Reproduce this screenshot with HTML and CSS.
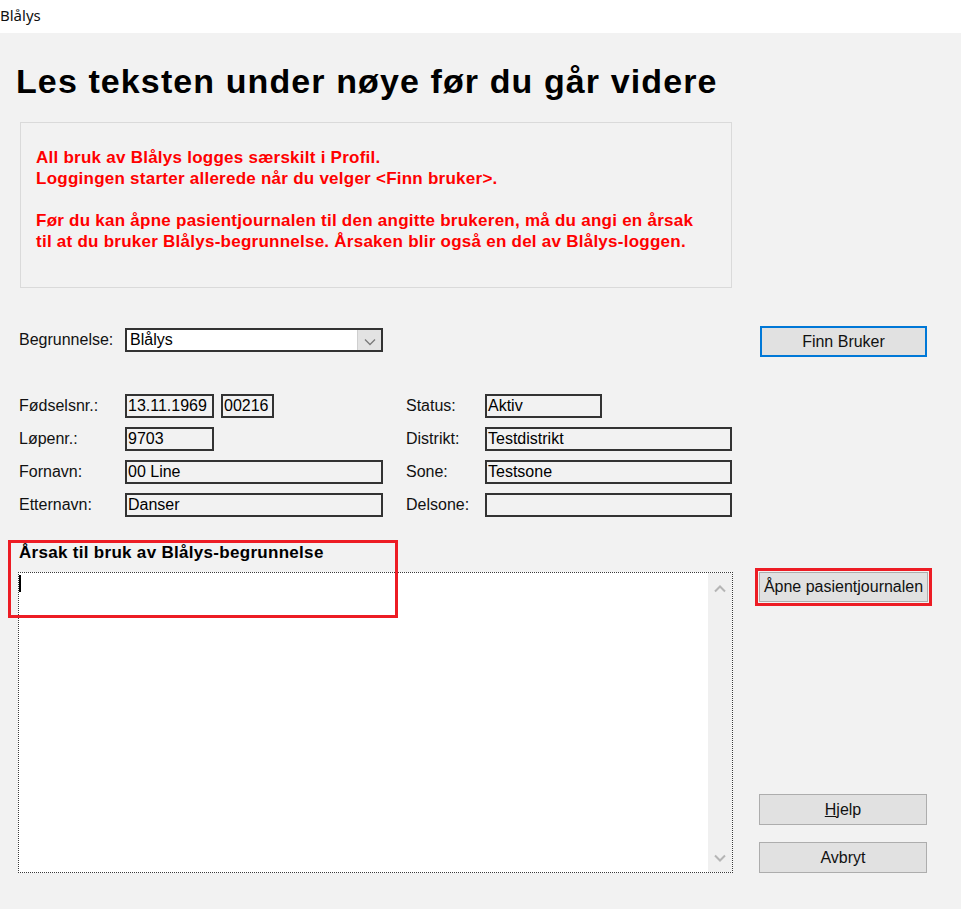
FILE: index.html
```html
<!DOCTYPE html>
<html lang="no">
<head>
<meta charset="utf-8">
<title>Blålys</title>
<link rel="stylesheet" href="styles.css">
</head>
<body>
<div class="titlebar">Blålys</div>
<main class="window">
  <h1 class="heading">Les teksten under nøye før du går videre</h1>
  <div class="notice">
    <p>All bruk av Blålys logges særskilt i Profil.<br>Loggingen starter allerede når du velger &lt;Finn bruker&gt;.</p>
    <p>Før du kan åpne pasientjournalen til den angitte brukeren, må du angi en årsak<br>til at du bruker Blålys-begrunnelse. Årsaken blir også en del av Blålys-loggen.</p>
  </div>
  <div class="form">
    <div class="combo-row">
      <span class="lbl lbl-wide">Begrunnelse:</span>
      <div class="combo">
        <span class="combo-text">Blålys</span>
        <span class="combo-btn"><svg width="12" height="8" viewBox="0 0 12 8"><path d="M1 1.5 L6 6.5 L11 1.5" fill="none" stroke="#7a7a7a" stroke-width="1.3"/></svg></span>
      </div>
      <button class="btn btn-default">Finn Bruker</button>
    </div>

    <div class="fields">
      <span class="lbl">Fødselsnr.:</span>
      <div class="pair"><span class="box w-date">13.11.1969</span><span class="box w-pnr">00216</span></div>
      <span class="lbl">Status:</span>
      <span class="box w-status">Aktiv</span>

      <span class="lbl">Løpenr.:</span>
      <span class="box w-date">9703</span>
      <span class="lbl">Distrikt:</span>
      <span class="box w-right">Testdistrikt</span>

      <span class="lbl">Fornavn:</span>
      <span class="box w-long">00 Line</span>
      <span class="lbl">Sone:</span>
      <span class="box w-right">Testsone</span>

      <span class="lbl">Etternavn:</span>
      <span class="box w-long">Danser</span>
      <span class="lbl">Delsone:</span>
      <span class="box w-right"></span>
    </div>

    <div class="reason">
      <div class="reason-title">Årsak til bruk av Blålys-begrunnelse</div>
      <div class="memo">
        <div class="memo-text"><span class="caret"></span></div>
        <div class="scrollbar">
          <svg width="12" height="8" viewBox="0 0 12 8"><path d="M1 6.5 L6 1.5 L11 6.5" fill="none" stroke="#b5b5b5" stroke-width="2"/></svg>
          <svg width="12" height="8" viewBox="0 0 12 8"><path d="M1 1.5 L6 6.5 L11 1.5" fill="none" stroke="#b5b5b5" stroke-width="2"/></svg>
        </div>
      </div>
      <div class="side">
        <button class="btn btn-marked">Åpne pasientjournalen</button>
        <button class="btn btn-help"><u>H</u>jelp</button>
        <button class="btn">Avbryt</button>
      </div>
      <div class="highlight"></div>
    </div>
  </div>
</main>
</body>
</html>
```
FILE: styles.css
```css
* { box-sizing: border-box; }
html, body { margin: 0; padding: 0; }
body {
  width: 961px;
  height: 909px;
  background: #f2f2f2;
  font-family: "Liberation Sans", Arial, sans-serif;
  color: #000;
  overflow: hidden;
}
.titlebar {
  height: 33px;
  background: #fff;
  font-family: "Noto Sans", "Open Sans", sans-serif;
  font-size: 15px;
  line-height: 30px;
  padding-left: 0;
  color: #111;
}
.window {
  background: #f2f2f2;
  height: 876px;
  padding-top: 28px;
}
.heading {
  margin: 0 0 21px 16px;
  font-size: 34px;
  font-weight: bold;
  line-height: 40px;
  letter-spacing: 1.1px;
  white-space: nowrap;
}
.notice {
  margin-left: 20px;
  width: 712px;
  height: 166px;
  border: 1px solid #dadada;
  padding: 24px 0 0 15px;
  color: #ff0000;
  font-weight: bold;
  font-size: 17px;
  line-height: 21px;
  letter-spacing: 0.25px;
  white-space: nowrap;
}
.notice p { margin: 0 0 21px 0; }

.form {
  margin-left: 19px;
  width: 908px;
}
.lbl {
  font-size: 16px;
  line-height: 20px;
  color: #111;
}
.combo-row {
  display: flex;
  align-items: flex-start;
  margin-top: 38px;
  height: 31px;
}
.lbl-wide { width: 106px; margin-top: 4px; }
.combo {
  margin-top: 2px;
  width: 258px;
  height: 24px;
  background: #fff;
  border: 2px solid #333;
  display: flex;
  align-items: stretch;
}
.combo-text {
  flex: 1;
  font-size: 16px;
  line-height: 20px;
  padding-left: 3px;
}
.combo-btn {
  width: 24px;
  background: #e3e3e3;
  border-left: 1px solid #cfcfcf;
  display: flex;
  align-items: center;
  justify-content: center;
  padding-top: 3px;
}
.btn {
  width: 168px;
  height: 31px;
  background: #e1e1e1;
  border: 1px solid #adadad;
  font-family: "Liberation Sans", Arial, sans-serif;
  font-size: 16px;
  color: #111;
  padding: 0;
}
.btn-default {
  margin-left: auto;
  width: 167px;
  border: 2px solid #0078d7;
}

.fields {
  margin-top: 37px;
  display: grid;
  grid-template-columns: 106px 281px 79px 247px;
  grid-auto-rows: 24px;
  row-gap: 9px;
  align-items: center;
}
.pair { display: flex; gap: 7px; }
.box {
  display: block;
  height: 24px;
  border: 2px solid #333;
  font-size: 16px;
  line-height: 20px;
  padding-left: 1px;
  white-space: nowrap;
  overflow: hidden;
}
.w-date { width: 89px; }
.w-pnr { width: 53px; }
.w-long { width: 258px; }
.w-status { width: 117px; }
.w-right { width: 247px; }

.reason {
  position: relative;
  margin-top: 26px;
  display: grid;
  grid-template-columns: 714px 168px;
  column-gap: 26px;
}
.reason-title {
  grid-column: 1 / 3;
  font-size: 17px;
  font-weight: bold;
  line-height: 20px;
  letter-spacing: 0.3px;
  margin-bottom: 9px;
}
.memo {
  margin-left: -1px;
  width: 715px;
  height: 301px;
  background: #fff;
  border: 1px dotted #3a3a3a;
  display: flex;
}
.memo-text { flex: 1; padding: 2px 0 0 0; }
.caret {
  display: block;
  width: 2px;
  height: 17px;
  background: #000;
}
.scrollbar {
  width: 24px;
  background: #f0f0f0;
  display: flex;
  flex-direction: column;
  justify-content: space-between;
  align-items: center;
  padding: 12px 0 10px;
}
.side {
  display: flex;
  flex-direction: column;
  height: 301px;
}
.btn-marked {
  width: 169px;
  height: 30px;
  outline: 3px solid #ed1c24;
  outline-offset: 1px;
}
.btn-help { margin-top: auto; margin-bottom: 17px; }
.highlight {
  position: absolute;
  left: -11px;
  top: -3px;
  width: 390px;
  height: 78px;
  border: 3px solid #ed1c24;
  pointer-events: none;
}
```
